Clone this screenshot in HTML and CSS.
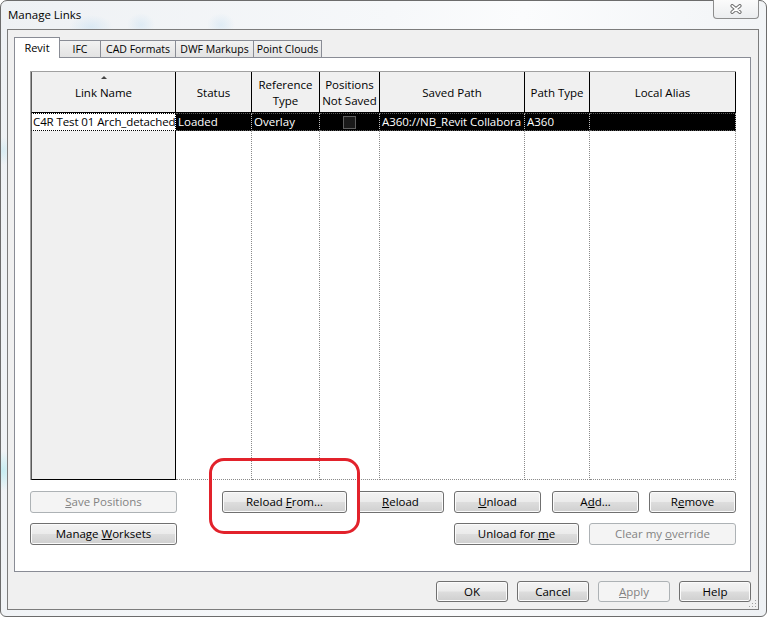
FILE: index.html
```html
<!DOCTYPE html>
<html>
<head>
<meta charset="utf-8">
<title>Manage Links</title>
<link rel="stylesheet" href="styles.css">
</head>
<body>
<div class="window">
  <div class="titlebar">
    <span class="title">Manage Links</span>
    <div class="close">
      <svg width="12" height="10" viewBox="0 0 12 10">
        <path d="M2.2 1.8 L9.8 8.2 M9.8 1.8 L2.2 8.2" stroke="#707070" stroke-width="3.6" stroke-linecap="round" fill="none"/>
        <path d="M2.2 1.8 L9.8 8.2 M9.8 1.8 L2.2 8.2" stroke="#ffffff" stroke-width="1.6" stroke-linecap="round" fill="none"/>
      </svg>
    </div>
  </div>
  <div class="client">
    <div class="tabs">
      <div class="tab active">Revit</div>
      <div class="tab t-ifc">IFC</div>
      <div class="tab t-cad">CAD Formats</div>
      <div class="tab t-dwf">DWF Markups</div>
      <div class="tab t-pc">Point Clouds</div>
    </div>
    <div class="panel">
      <div class="grid">
        <div class="hd hd-first"><span class="sort"></span>Link Name</div>
        <div class="hd">Status</div>
        <div class="hd">Reference<br>Type</div>
        <div class="hd">Positions<br>Not Saved</div>
        <div class="hd">Saved Path</div>
        <div class="hd">Path Type</div>
        <div class="hd">Local Alias</div>

        <div class="cell cell-focus">C4R Test 01 Arch_detached</div>
        <div class="cell sel">Loaded</div>
        <div class="cell sel">Overlay</div>
        <div class="cell sel center"><span class="check"></span></div>
        <div class="cell sel path">A360://NB_Revit Collabora</div>
        <div class="cell sel">A360</div>
        <div class="cell sel"></div>

        <div class="fill fill-first"></div>
        <div class="fill"></div>
        <div class="fill"></div>
        <div class="fill"></div>
        <div class="fill"></div>
        <div class="fill"></div>
        <div class="fill"></div>
      </div>

      <div class="btnrow row1">
        <button class="btn wide disabled"><u>S</u>ave Positions</button>
        <button class="btn mid reload-from">Reload <u>F</u>rom…</button>
        <button class="btn small"><u>R</u>eload</button>
        <button class="btn small"><u>U</u>nload</button>
        <button class="btn small add">A<u>d</u>d…</button>
        <button class="btn small">R<u>e</u>move</button>
      </div>
      <div class="btnrow row2">
        <button class="btn wide">Manage <u>W</u>orksets</button>
        <div class="group">
          <button class="btn mid">Unload for <u>m</u>e</button>
          <button class="btn wide disabled">Clear my <u>o</u>verride</button>
        </div>
      </div>
      <div class="highlight"></div>
    </div>
    <div class="footer">
      <button class="btn foot">OK</button>
      <button class="btn foot">Cancel</button>
      <button class="btn foot disabled"><u>A</u>pply</button>
      <button class="btn foot">Help</button>
    </div>
    <svg class="grip" width="8" height="8" viewBox="0 0 8 8">
      <rect x="6" y="0" width="1" height="1" fill="#a0a0a0"/>
      <rect x="3" y="3" width="1" height="1" fill="#a0a0a0"/>
      <rect x="6" y="3" width="1" height="1" fill="#a0a0a0"/>
      <rect x="0" y="6" width="1" height="1" fill="#a0a0a0"/>
      <rect x="3" y="6" width="1" height="1" fill="#a0a0a0"/>
      <rect x="6" y="6" width="1" height="1" fill="#a0a0a0"/>
    </svg>
  </div>
</div>
</body>
</html>
```
FILE: styles.css
```css
* { box-sizing: border-box; }
html, body { margin: 0; padding: 0; }
body {
  width: 767px;
  height: 617px;
  background: #ffffff;
  font-family: "Open Sans", "Noto Sans", sans-serif;
  font-size: 11.5px;
  color: #000;
  overflow: hidden;
}
.window {
  width: 767px;
  height: 617px;
  border: 1px solid #6c6c6c;
  border-radius: 7px 7px 6px 6px;
  padding: 0 7px 0 6px;
  background:
    radial-gradient(ellipse 12px 20px at 2px 470px, rgba(120, 225, 235, 0.35), transparent),
    radial-gradient(ellipse 10px 14px at 2px 150px, rgba(150, 220, 240, 0.25), transparent),
    radial-gradient(ellipse 22px 12px at 90px 26px, rgba(180, 215, 240, 0.35), transparent),
    radial-gradient(ellipse 14px 12px at 140px 24px, rgba(180, 215, 240, 0.3), transparent),
    radial-gradient(ellipse 14px 12px at 220px 24px, rgba(180, 215, 240, 0.3), transparent),
    linear-gradient(100deg, #eef1f4 0%, #f6f8fa 45%, #fbfcfd 60%, #eef1f4 100%);
  display: flex;
  flex-direction: column;
}
.titlebar {
  height: 28px;
  display: flex;
  align-items: flex-start;
  justify-content: space-between;
  flex-shrink: 0;
}
.title {
  margin-top: 6px;
  margin-left: 1px;
  font-size: 11.5px;
  color: #000;
}
.close {
  width: 46px;
  height: 19px;
  margin-top: -1px;
  border: 1px solid #8d8d8d;
  border-top: none;
  border-radius: 0 0 4px 4px;
  background: linear-gradient(#fbfbfb, #ebedef);
  display: flex;
  align-items: center;
  justify-content: center;
}
.client {
  position: relative;
  height: 581px;
  border: 1px solid #7c7c7c;
  background: #f0f0f0;
  padding: 7px 7px 0 6px;
  display: flex;
  flex-direction: column;
}
.tabs {
  display: flex;
  align-items: flex-end;
  height: 20px;
}
.tab {
  height: 17px;
  border: 1px solid #898c95;
  border-bottom: none;
  background: linear-gradient(#f2f2f2, #e3e3e3);
  display: flex;
  align-items: center;
  justify-content: center;
  margin-left: -1px;
  line-height: 1;
  padding-top: 1px;
  font-size: 10.5px;
  white-space: nowrap;
}
.tab.active {
  position: relative;
  z-index: 2;
  height: 21px;
  margin-bottom: -1px;
  margin-left: 0;
  background: #ffffff;
  width: 46px;
  padding-top: 0;
  padding-bottom: 2px;
  font-size: 11px;
}
.t-ifc { width: 42px; }
.t-cad { width: 76px; }
.t-dwf { width: 79px; }
.t-pc { width: 69px; }
.panel {
  position: relative;
  width: 737px;
  height: 515px;
  border: 1px solid #898c95;
  background: #ffffff;
  padding: 13px 0 0 15px;
}
.grid {
  width: 706px;
  height: 409px;
  display: grid;
  grid-template-columns: 145px 76px 68px 60px 145px 65px 146px;
  grid-template-rows: 41px 18px 349px;
  border-top: 1px solid #a0a0a0;
  border-left: 1px solid #a0a0a0;
}
.hd {
  background: #f0f0f0;
  border-right: 1px solid #000;
  border-bottom: 1px solid #000;
  display: flex;
  align-items: center;
  justify-content: center;
  text-align: center;
  line-height: 16px;
  padding-top: 1px;
}
.hd-first {
  position: relative;
  border-left: 1px solid #5a5a5a;
}
.sort {
  position: absolute;
  left: 69px;
  top: 4px;
  width: 0;
  height: 0;
  border-left: 3px solid transparent;
  border-right: 3px solid transparent;
  border-bottom: 3px solid #444;
}
.cell {
  white-space: nowrap;
  overflow: hidden;
  text-overflow: clip;
  line-height: 16px;
  padding-left: 2px;
}
.cell-focus {
  background: #ffffff;
  border: 1px dotted #000;
  border-left: 1px solid #5a5a5a;
  border-right: 1px dotted #000;
  color: #000;
  padding-left: 1px;
  letter-spacing: -0.1px;
}
.sel {
  background: #000;
  color: #fff;
  border-right: 1px dotted #bdbdbd;
  border-top: 1px dotted #5a5a5a;
  border-bottom: 1px dotted #5a5a5a;
}
.path {
  letter-spacing: -0.05px;
}
.center {
  display: flex;
  align-items: center;
  justify-content: center;
  padding-left: 0;
}
.check {
  width: 13px;
  height: 13px;
  border: 1px solid #5e5e5e;
  background: #1a1a1a;
}
.fill {
  background: #fff;
  border-right: 1px dotted #8a8a8a;
  border-bottom: 1px dotted #8a8a8a;
}
.fill-first {
  background: #f0f0f0;
  border-left: 1px solid #5a5a5a;
  border-right: 1px solid #000;
  border-bottom: 1px solid #000;
}
.btnrow {
  width: 706px;
  display: flex;
}
.row1 {
  margin-top: 11px;
  gap: 10px;
}
.row2 {
  margin-top: 10px;
  justify-content: space-between;
}
.group {
  display: flex;
  gap: 10px;
}
.btn {
  height: 22px;
  border: 1px solid #707070;
  border-radius: 3px;
  background: linear-gradient(#f3f3f3 0%, #ebebeb 48%, #dddddd 52%, #cfcfcf 100%);
  box-shadow: inset 0 0 0 1px #fbfbfb;
  font-family: "Open Sans", "Noto Sans", sans-serif;
  font-size: 11.5px;
  color: #000;
  padding: 0;
  line-height: 18px;
  text-align: center;
}
.btn.disabled {
  border-color: #adb2b5;
  background: #f4f4f4;
  box-shadow: none;
  color: #838383;
}
.wide { width: 147px; }
.mid { width: 125px; }
.small { width: 87px; }
.add { margin-left: 1px; }
.reload-from { margin-left: 35px; }
.footer {
  margin-top: 9px;
  width: 737px;
  display: flex;
  justify-content: flex-end;
  gap: 9px;
}
.btn.foot {
  width: 72px;
  height: 21px;
  line-height: 17px;
}
.highlight {
  position: absolute;
  left: 194px;
  top: 400px;
  width: 151px;
  height: 76px;
  border: 3px solid #e2222b;
  border-radius: 15px;
  pointer-events: none;
}
.grip {
  position: absolute;
  right: 1px;
  bottom: 1px;
}
```
